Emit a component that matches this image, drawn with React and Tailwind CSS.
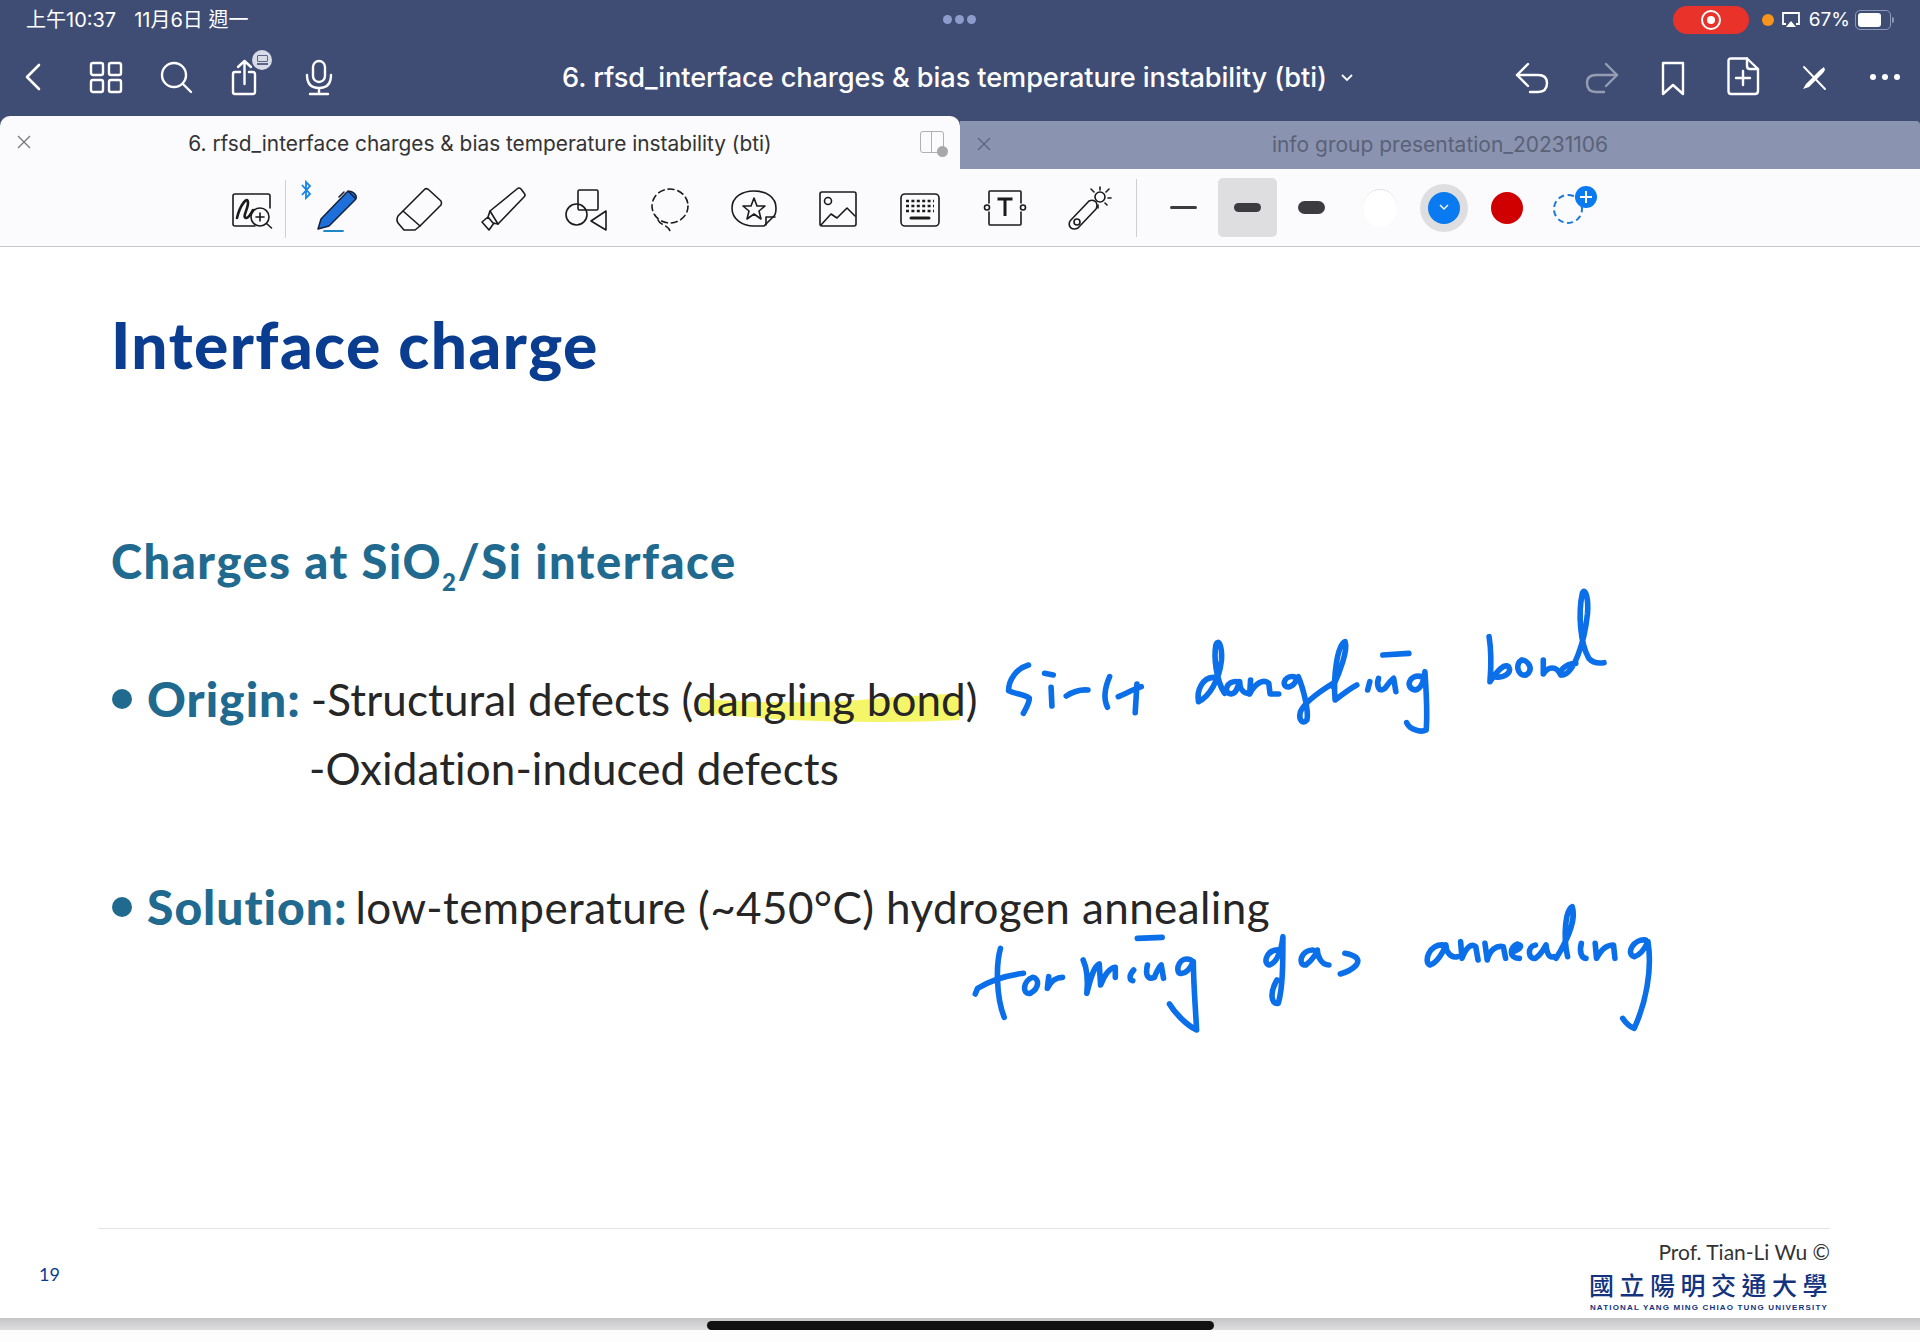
import React from 'react';

const SOFT = "'Noto Sans CJK TC', sans-serif";

// handwriting, coordinates follow the strokes as traced off the slide
const noteTop = [
  'M158 285 C130 295 112 330 112 362 C125 372 150 372 160 385 C160 400 150 420 146 430',
  'M195 310 L215 315', 'M210 352 L212 408',
  'M245 378 C260 365 275 358 295 360',
  'M345 320 C335 350 330 385 340 412',
  'M365 380 C380 372 400 358 418 350', 'M408 342 L404 428',
  'M585 322 C560 322 545 360 550 395 C575 380 598 330 603 270 C605 225 595 205 590 225 C585 260 590 330 610 370',
  'M640 335 C615 330 605 370 625 372 C640 370 640 345 645 335 C645 350 650 370 665 370',
  'M670 330 L668 372 C680 340 700 325 712 340 L715 372 L735 372',
  'M770 320 C745 315 740 355 760 350 C775 345 775 325 780 320 C790 350 805 420 800 450 C790 465 780 450 785 425 C795 395 835 360 860 340',
  'M860 350 C875 310 895 240 888 215 C870 225 860 320 865 390 C880 375 900 355 915 345',
  'M945 335 L940 360',
  'M965 325 C960 345 965 370 980 355 C990 335 995 330 1000 325 L1005 365',
  'M975 255 L1035 250',
  'M1065 320 C1035 310 1025 355 1050 360 C1065 355 1070 330 1072 305 C1075 360 1078 430 1075 480 C1060 490 1035 475 1030 458',
  'M1220 200 C1225 240 1225 290 1222 335 C1240 300 1255 280 1265 290 C1275 310 1250 325 1235 320',
  'M1295 270 C1280 280 1285 320 1305 315 C1325 300 1310 270 1295 270',
  'M1345 270 L1345 312 C1355 290 1375 285 1385 315',
  'M1420 280 C1395 280 1375 310 1390 315 C1415 310 1440 220 1447 130 C1450 80 1440 50 1435 70 C1425 130 1430 220 1450 265 C1460 280 1475 280 1485 278',
];

const noteBottom = [
  'M110 175 C100 220 100 320 118 382', 'M55 312 L60 295 C90 270 130 255 160 250',
  'M180 262 C160 270 155 315 175 310 C195 295 195 265 180 262',
  'M215 260 L212 295 C220 270 235 262 245 262',
  'M290 210 C300 240 300 280 298 310 C305 270 312 230 325 222 L328 285 C335 260 345 235 360 232 L360 262',
  'M400 240 C390 255 390 270 398 272',
  'M430 225 C425 255 430 270 445 262 C450 245 455 230 460 225 L465 265',
  'M408 145 L462 142',
  'M525 210 C500 195 490 240 500 250 C515 255 525 230 530 215 C530 280 535 360 537 420 C515 405 490 370 478 342',
  'M720 180 C690 175 680 220 695 225 C712 220 722 180 725 140 C725 220 725 290 715 340 C700 345 695 310 712 270',
  'M790 180 C765 180 755 225 775 225 C790 210 800 185 800 180 C800 200 810 225 825 225',
  'M860 190 C880 195 895 205 885 225 C875 240 860 248 850 252',
  'M1075 165 C1045 160 1030 215 1045 225 C1060 220 1075 185 1080 165 C1080 185 1090 205 1105 200',
  'M1112 155 L1115 205 C1125 170 1135 160 1145 170 L1150 210',
  'M1165 160 L1170 210 C1175 180 1190 165 1205 170 L1210 205',
  'M1225 185 C1240 180 1250 165 1235 162 C1220 170 1215 205 1240 205',
  'M1275 165 C1255 170 1260 210 1275 205 C1290 190 1295 170 1298 165 C1300 190 1305 205 1315 200',
  'M1320 205 C1340 160 1365 90 1355 50 C1340 60 1335 140 1345 200',
  'M1375 160 C1370 185 1375 205 1385 205',
  'M1405 160 L1408 205 C1420 175 1430 165 1445 165 L1448 205',
  'M1515 150 C1490 145 1470 190 1490 200 C1505 195 1515 170 1520 155 C1530 240 1515 340 1490 415 C1480 410 1470 395 1465 385',
];

function Ink({ strokes, vw, vh, className }) {
  return (
    <svg className={className} viewBox={`0 0 ${vw} ${vh}`} preserveAspectRatio="none" fill="none">
      {strokes.map((d, i) => (
        <path key={i} d={d} stroke="#0a6fe8" strokeWidth="5.6" strokeLinecap="round" strokeLinejoin="round" vectorEffect="non-scaling-stroke" />
      ))}
    </svg>
  );
}

function TopIcon({ w = 40, children, className = '' }) {
  return (
    <svg width={w} height="40" viewBox={`0 0 ${w} 40`} fill="none" stroke="#fff" strokeWidth="2.4" strokeLinecap="round" strokeLinejoin="round" className={className}>
      {children}
    </svg>
  );
}

function StatusBar() {
  return (
    <div className="relative h-[40px] flex items-center justify-between text-white pl-[26px] pr-[29px]">
      <div className="flex items-center gap-[18px] text-[20px]" style={{ fontFamily: `Inter, ${SOFT}` }}>
        <span>上午10:37</span>
        <span>11月6日 週一</span>
      </div>
      <div className="absolute left-[943px] top-[15px] flex gap-[3px]">
        <i className="w-[9px] h-[9px] rounded-full bg-[#8d9ccc]" />
        <i className="w-[9px] h-[9px] rounded-full bg-[#8d9ccc]" />
        <i className="w-[9px] h-[9px] rounded-full bg-[#8d9ccc]" />
      </div>
      <div className="flex items-center font-['Inter']">
        <div className="w-[76px] h-[28px] rounded-full bg-[#e8322a] flex items-center justify-center">
          <div className="w-[20px] h-[20px] rounded-full border-2 border-white flex items-center justify-center">
            <div className="w-[8px] h-[8px] rounded-full bg-white" />
          </div>
        </div>
        <div className="w-[12px] h-[12px] rounded-full bg-[#f7941d] ml-[13px]" />
        <svg width="20" height="18" viewBox="0 0 20 18" fill="none" className="ml-[7px]">
          <path d="M5 13 H2 V2 H18 V13 H15" stroke="#fff" strokeWidth="1.8" />
          <path d="M10 10 L15 16 H5 Z" fill="#fff" />
        </svg>
        <span className="ml-[8px] text-[19px]">67%</span>
        <div className="relative ml-[5px] w-[36px] h-[20px] rounded-[5px] border border-[#8d99b8] p-[2px]">
          <div className="w-[23px] h-full rounded-[3px] bg-white" />
          <div className="absolute -right-[4px] top-[6px] w-[2px] h-[6px] rounded-r bg-[#8d99b8]" />
        </div>
      </div>
    </div>
  );
}

function NavBar() {
  return (
    <div className="relative h-[76px] flex items-center pb-[2px] text-white">
      <div className="flex items-center pl-[14px] w-[360px]">
        <TopIcon>
          <path d="M25 8 L13 20 L25 32" strokeWidth="2.6" />
        </TopIcon>
        <TopIcon className="ml-[32px]">
          <rect x="5" y="6" width="12" height="12" rx="2" />
          <rect x="23" y="6" width="12" height="12" rx="2" />
          <rect x="5" y="23" width="12" height="12" rx="2" />
          <rect x="23" y="23" width="12" height="12" rx="2" />
        </TopIcon>
        <TopIcon className="ml-[30px]">
          <circle cx="18" cy="18" r="12" />
          <path d="M27 27 L35 35" />
        </TopIcon>
        <div className="relative ml-[31px] w-[40px] h-[40px]">
          <TopIcon>
            <path d="M13 15 H8 Q6 15 6 17 V35 Q6 37 8 37 H26 Q28 37 28 35 V17 Q28 15 26 15 H22" />
            <path d="M17.5 27 V4 M11 10 L17.5 4 L24 10" />
          </TopIcon>
          <div className="absolute -right-[5px] -top-[7px] w-[20px] h-[20px] rounded-full bg-[#d9dce6] flex flex-col items-center justify-center gap-[1px]">
            <div className="w-[11px] h-[7px] rounded-[1px] border border-[#5a6688]" />
            <div className="w-[11px] h-[2px] bg-[#5a6688]" />
          </div>
        </div>
        <TopIcon className="ml-[32px]">
          <rect x="14" y="4" width="12" height="21" rx="6" />
          <path d="M8 18 Q8 31 20 31 Q32 31 32 18 M20 31 V37 M11 37 H29" />
        </TopIcon>
      </div>
      <div className="absolute left-[562px] top-[20px] flex items-center whitespace-nowrap">
        <span className="font-['Inter'] text-[27.2px] leading-[36px] font-medium tracking-[-0.1px]">6. rfsd_interface charges &amp; bias temperature instability (bti)</span>
        <svg width="12" height="8" viewBox="0 0 12 8" fill="none" className="ml-[14px]">
          <path d="M1 1 L6 6 L11 1" stroke="#fff" strokeWidth="1.8" />
        </svg>
      </div>
      <div className="ml-auto flex items-center pr-[20px] gap-[30.4px]">
        <TopIcon>
          <path d="M5 18 H26 Q35 18 35 26 Q35 35 26 35 H18" />
          <path d="M16 7 L5 18 L16 29" />
        </TopIcon>
        <TopIcon className="opacity-45">
          <path d="M35 18 H14 Q5 18 5 26 Q5 35 14 35 H22" />
          <path d="M24 7 L35 18 L24 29" />
        </TopIcon>
        <TopIcon>
          <path d="M10 6 H30 V37 L20 28 L10 37 Z" />
        </TopIcon>
        <TopIcon>
          <path d="M8 1.5 H24 L35 12 V34 Q35 37 32 37 H8 Q5.5 37 5.5 34 V4 Q5.5 1.5 8 1.5 Z" />
          <path d="M24 1.5 V9 Q24 12 27 12 H35 M20 14 V28 M13 21 H27" />
        </TopIcon>
        <TopIcon>
          <path d="M10 10 L31 32" strokeWidth="1.9" />
          <path d="M9 32 L12 27 L26 13 L30 10 L31 13 L29 16 L15 30 Z" fill="#fff" stroke="none" />
        </TopIcon>
        <div className="ml-[6px] flex justify-between items-center w-[30px]">
          <i className="w-[6px] h-[6px] rounded-full bg-white" />
          <i className="w-[6px] h-[6px] rounded-full bg-white" />
          <i className="w-[6px] h-[6px] rounded-full bg-white" />
        </div>
      </div>
    </div>
  );
}

function Tabs() {
  return (
    <div className="relative h-[53px] flex font-['Inter']">
      <div className="relative w-[960px] rounded-t-[10px] bg-[#fbfafc] flex items-center justify-center text-[#333]">
        <svg width="14" height="14" viewBox="0 0 14 14" className="absolute left-[17px] top-[19px]" stroke="#777" strokeWidth="1.3">
          <path d="M1 1 L13 13 M13 1 L1 13" />
        </svg>
        <span className="text-[20.85px] relative top-[1px]">6. rfsd_interface charges &amp; bias temperature instability (bti)</span>
        <div className="absolute left-[920px] top-[15px] w-[24px] h-[22px] rounded-[3px] border border-[#b0b0b4]">
          <div className="h-full w-[11px] border-r border-[#b0b0b4]" />
          <div className="absolute -right-[5px] -bottom-[5px] w-[11px] h-[11px] rounded-full bg-[#a8a8ac]" />
        </div>
      </div>
      <div className="relative mt-[5px] flex-1 rounded-tr-[4px] bg-[#8a93b0] flex items-center justify-center text-[#5a6278]">
        <svg width="14" height="14" viewBox="0 0 14 14" className="absolute left-[17px] top-[16px]" stroke="#5c647c" strokeWidth="1.3">
          <path d="M1 1 L13 13 M13 1 L1 13" />
        </svg>
        <span className="text-[21px]">info group presentation_20231106</span>
      </div>
    </div>
  );
}

function ToolIcon({ children }) {
  return (
    <svg width="48" height="48" viewBox="0 0 48 48" fill="none" stroke="#1b1b1b" strokeWidth="1.6" strokeLinecap="round" strokeLinejoin="round">
      {children}
    </svg>
  );
}

function Tool({ children }) {
  return <div className="w-[83.7px] flex justify-center pt-[2px]">{children}</div>;
}

function Toolbar() {
  return (
    <div className="h-[78px] flex items-center bg-[#fbfafc] border-b border-[#c6c6c8] pl-[210px]">
      <Tool>
        <ToolIcon>
          <path d="M27 41 H7 Q5 41 5 39 V11 Q5 9 7 9 H40 Q42 9 42 11 V23" />
          <path d="M9 33 C12 20 20 10 20 18 C20 24 14 32 18 33 C21 33 23 28 25 25" strokeWidth="2.6" />
          <circle cx="32" cy="32" r="9" />
          <path d="M38.5 38.5 L43.5 43 M32 28 V36 M28 32 H36" />
        </ToolIcon>
      </Tool>
      <div className="relative">
        <div className="absolute -left-[9px] -top-[28px] w-px h-[58px] bg-[#cfcfd2]" />
        <svg width="12" height="20" viewBox="0 0 12 20" fill="none" stroke="#1583e8" strokeWidth="1.8" className="absolute left-[6px] -top-[28px] z-10">
          <path d="M2 5 L10 14 L6 18 V2 L10 6 L2 15" />
        </svg>
      </div>
      <Tool>
        <ToolIcon>
          <path d="M6 44 L9 34 L35 7 Q38 5 42 8 Q46 12 43 15 L17 41 Z" fill="#1e6fd9" stroke="#16223a" strokeWidth="1.5" />
          <path d="M32 7 L27 12 M36 6 L43 13" stroke="#16223a" />
          <path d="M12 46 H31" stroke="#1e88c7" strokeWidth="1.8" />
        </ToolIcon>
      </Tool>
      <Tool>
        <ToolIcon>
          <path d="M30 4 Q32 3 34 5 L46 16 Q47 18 46 20 L25 41 L8 26 Z" />
          <path d="M8 26 L3 31 Q1 35 3 38 L9 45 H20 L25 41" />
        </ToolIcon>
      </Tool>
      <Tool>
        <ToolIcon>
          <path d="M38 4 Q40 2 42 4 L45 8 Q47 10 45 12 L19 39 L11 26 Z" />
          <path d="M11 26 L9 32 L14 38 L19 39 M9 32 L3 37 L10 45 L15 38" />
        </ToolIcon>
      </Tool>
      <Tool>
        <ToolIcon>
          <rect x="15" y="5" width="20" height="20" rx="1.5" />
          <circle cx="13.5" cy="29.5" r="10.5" />
          <path d="M43 26 V45 L28 36 Z" />
        </ToolIcon>
      </Tool>
      <Tool>
        <ToolIcon>
          <ellipse cx="24" cy="21" rx="18" ry="17" strokeDasharray="6 4" />
          <path d="M12 35 C14 40 22 40 24 46" strokeDasharray="6 4" />
        </ToolIcon>
      </Tool>
      <Tool>
        <ToolIcon>
          <path d="M34 41 H24 C12 41 2 34 2 23 C2 12 12 6 24 6 C36 6 46 12 46 23 C46 27 46 29 44 31 L34 41 Z" />
          <path d="M24 13 L27 21 L35 21 L29 26 L31 34 L24 29 L17 34 L19 26 L13 21 L21 21 Z" />
          <path d="M36 40 V32 H45" />
        </ToolIcon>
      </Tool>
      <Tool>
        <ToolIcon>
          <rect x="6" y="7" width="36" height="34" rx="2" />
          <circle cx="14" cy="16" r="3.5" />
          <path d="M7 40 L17 29 L23 33 L33 23 L41 31" />
        </ToolIcon>
      </Tool>
      <Tool>
        <ToolIcon>
          <rect x="4" y="9" width="38" height="32" rx="4" />
          <path d="M9 16 H37 M9 21 H37 M9 26 H37" strokeDasharray="3 2.4" strokeWidth="2.4" strokeLinecap="butt" />
          <path d="M14 33 H32" strokeWidth="3" />
        </ToolIcon>
      </Tool>
      <Tool>
        <ToolIcon>
          <path d="M8 18 V7 Q8 6 9 6 H39 Q40 6 40 7 V18 M8 27 V39 Q8 40 9 40 H39 Q40 40 40 39 V27" />
          <circle cx="6" cy="22.5" r="2.5" />
          <circle cx="42" cy="22.5" r="2.5" />
          <path d="M16.5 14 H31.5 M24 14 V31" strokeWidth="3" strokeLinecap="butt" />
        </ToolIcon>
      </Tool>
      <Tool>
        <ToolIcon>
          <path d="M5 36 L24 16 Q28 14 31 17 Q33 21 31 24 L13 43 Q9 45 6 43 Q3 40 5 36 Z" />
          <circle cx="12" cy="37" r="3" />
          <circle cx="35" cy="12" r="5" />
          <path d="M35 2 V5 M44 4 L41 7 M46 13 H43 M26 4 L29 7 M42 20 L40 18 M33 20 V23" />
        </ToolIcon>
      </Tool>
      <div className="ml-[5px] w-px h-[58px] bg-[#cfcfd2]" />
      <div className="ml-[33px] w-[27px] h-[3px] rounded-full bg-[#3c3c40]" />
      <div className="ml-[21px] w-[59px] h-[59px] rounded-[5px] bg-[#dedee0] flex items-center justify-center">
        <div className="w-[27px] h-[9px] rounded-full bg-[#3c3c40]" />
      </div>
      <div className="ml-[21px] w-[27px] h-[13px] rounded-full bg-[#3c3c40]" />
      <div className="ml-[39px] w-[32px] h-[38px] rounded-full bg-white border-t border-[#e2e2e2]" />
      <div className="ml-[24px] w-[48px] h-[48px] rounded-full bg-[#dedee0] flex items-center justify-center">
        <div className="w-[32px] h-[32px] rounded-full bg-[#0a7af0] flex items-center justify-center">
          <svg width="10" height="7" viewBox="0 0 10 7" fill="none">
            <path d="M1 1 L5 5 L9 1" stroke="#fff" strokeWidth="1.4" />
          </svg>
        </div>
      </div>
      <div className="ml-[23px] w-[32px] h-[32px] rounded-full bg-[#d00000]" />
      <div className="relative ml-[30px] w-[30px] h-[30px] mt-[2px] rounded-full border-2 border-dashed border-[#1a78d8]">
        <div className="absolute -right-[16px] -top-[10px] w-[22px] h-[22px] rounded-full bg-[#0a7af0] flex items-center justify-center text-white">
          <svg width="12" height="12" viewBox="0 0 12 12" stroke="#fff" strokeWidth="2">
            <path d="M6 0 V12 M0 6 H12" />
          </svg>
        </div>
      </div>
    </div>
  );
}

function Bullet({ label, children }) {
  return (
    <div className="flex items-center h-[70px]">
      <span className="w-[20px] h-[20px] rounded-full bg-[#1f6a8e] mr-[15px]" />
      <span className="font-black text-[#1f6a8e] text-[48px] tracking-[1px]">{label}</span>
      {children}
    </div>
  );
}

function Slide() {
  return (
    <div className="relative flex-1 bg-white font-['Lato'] overflow-hidden pl-[111px]">
      <h1 className="relative pt-[60px] text-[64px] leading-[76px] font-black text-[#0a3d8f] tracking-[1.45px]">Interface charge</h1>
      <h2 className="mt-[148px] text-[47px] leading-[60px] font-black text-[#1f6a8e] tracking-[1.55px]">
        Charges at SiO<sub className="text-[24px] align-[-6px] leading-none">2</sub>/Si interface
      </h2>
      <svg className="absolute left-[680px] top-[423px] w-[320px] h-[70px]" viewBox="0 0 960 210">
        <path d="M60 85 C200 100 400 100 540 90 C650 80 750 75 830 70 L845 110 L838 150 C700 158 500 158 330 150 C200 140 100 135 60 125 Z" fill="#f5f56a" />
      </svg>
      <div className="relative mt-[73px] pl-[1px]">
        <Bullet label="Origin:">
          <span className="ml-[10px] text-[44px] text-[#262626] tracking-[0.1px]">-Structural defects (dangling bond)</span>
        </Bullet>
        <div className="ml-[197px] -mt-[1px] h-[70px] flex items-center text-[44px] text-[#262626] tracking-[0.1px]">-Oxidation-induced defects</div>
        <div className="mt-[69px]">
          <Bullet label="Solution:">
            <span className="ml-[8px] text-[44px] text-[#262626] tracking-[0.4px]">low-temperature (~450°C) hydrogen annealing</span>
          </Bullet>
        </div>
      </div>
      <Ink strokes={noteTop} vw={1568} vh={570} className="absolute left-[960px] top-[323px] w-[680px] h-[190px] z-20" />
      <Ink strokes={noteBottom} vw={1568} vh={480} className="absolute left-[950px] top-[643px] w-[720px] h-[160px] z-20" />
      <div className="absolute left-[98px] right-[90px] top-[981px] h-px bg-[#e3e3e6]" />
      <span className="absolute left-[39px] top-[1014px] text-[18px] text-[#0a3d8f]">19</span>
      <div className="absolute right-[90px] top-[992px] flex flex-col items-end">
        <span className="text-[21px] leading-[26px] text-[#333]">Prof. Tian-Li Wu ©</span>
        <span className="text-[25px] leading-[35px] mt-[2px] font-medium text-[#14337f] tracking-[5.5px] mr-[-3px]" style={{ fontFamily: SOFT }}>國立陽明交通大學</span>
        <span className="text-[8px] leading-[12px] font-bold text-[#14337f] tracking-[1.17px] mr-[2px]" style={{ fontFamily: "'Liberation Sans', sans-serif" }}>NATIONAL YANG MING CHIAO TUNG UNIVERSITY</span>
      </div>
    </div>
  );
}

export default function App() {
  return (
    <div className="relative w-[1920px] h-[1342px] flex flex-col bg-[#fdfdfd] overflow-hidden">
      <div className="bg-[#3f4d75]">
        <StatusBar />
        <NavBar />
        <Tabs />
      </div>
      <Toolbar />
      <Slide />
      <div className="h-[12px] mb-[12px] bg-[linear-gradient(#c4c4c7,#dedee0)]" />
      <div className="absolute left-[707px] top-[1321px] w-[507px] h-[9px] rounded-full bg-[#111]" />
    </div>
  );
}
